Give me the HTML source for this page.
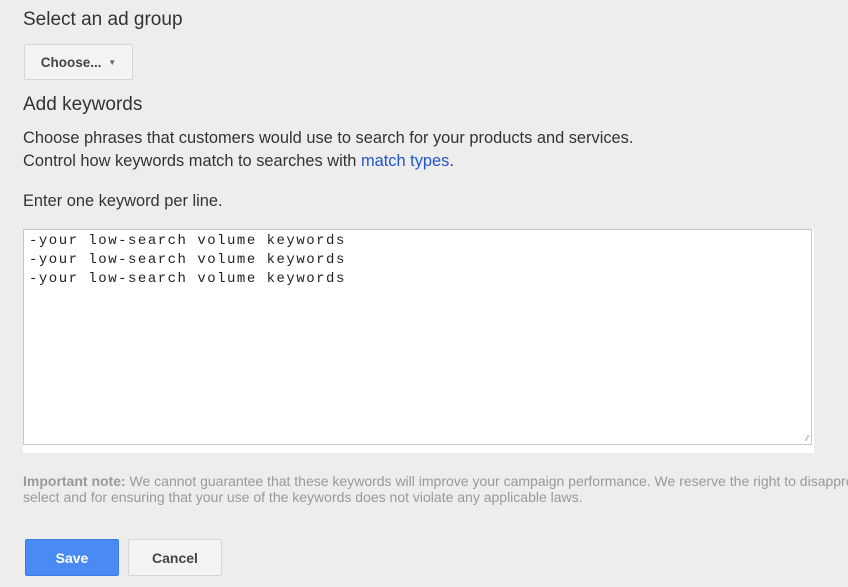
<!DOCTYPE html>
<html><head><style>
body{margin:0;width:848px;height:587px;background:#ededed;font-family:"Liberation Sans",Arial,sans-serif;overflow:hidden;position:relative;color:#222}
.a{position:absolute;white-space:nowrap}
h2{font-weight:normal;font-size:19px;margin:0;color:#333}
.btn{position:absolute;border:1px solid #d6d6d6;background:#f3f3f3;border-radius:2px;font-weight:bold;font-size:13px;color:#444;display:flex;align-items:center;justify-content:center;box-sizing:border-box}
</style></head><body>
<h2 class="a" style="left:23px;top:9px">Select an ad group</h2>
<div class="btn" style="left:24px;top:44px;width:109px;height:36px;font-size:13.5px">Choose...&nbsp;<span style="font-size:8px;color:#666;margin-left:3px">▼</span></div>
<h2 class="a" style="left:23px;top:94px">Add keywords</h2>
<div class="a" style="left:23px;top:127px;font-size:16.4px;line-height:23px;color:#333">Choose phrases that customers would use to search for your products and services.<br>Control how keywords match to searches with <span style="color:#2255cc">match types</span>.</div>
<div class="a" style="left:23px;top:192px;font-size:16.4px;color:#333">Enter one keyword per line.</div>
<div class="a" style="left:23px;top:229px;width:791px;height:224px;background:#fff"></div>
<div class="a" style="left:23px;top:229px;width:789px;height:216px;border:1px solid #c8c8c8;background:#fff;font-family:'Liberation Mono',monospace;font-size:14px;letter-spacing:1.5px;line-height:19px;padding:2px 5px;box-sizing:border-box;color:#222">-your low-search volume keywords<br>-your low-search volume keywords<br>-your low-search volume keywords</div>
<div class="a" style="left:806px;top:434px;font-size:8px;color:#999">⁄⁄</div>
<div class="a" style="left:23px;top:473px;font-size:14px;line-height:16px;color:#999">
<b style="color:#999">Important note:</b> We cannot guarantee that these keywords will improve your campaign performance. We reserve the right to disapprove any keywords you<br>select and for ensuring that your use of the keywords does not violate any applicable laws.</div>
<div class="btn" style="left:25px;top:539px;width:94px;height:37px;background:#4a8af4;border-color:#3b7be8;color:#fff;font-size:14px">Save</div>
<div class="btn" style="left:128px;top:539px;width:94px;height:37px;font-size:14px">Cancel</div>
</body></html>
